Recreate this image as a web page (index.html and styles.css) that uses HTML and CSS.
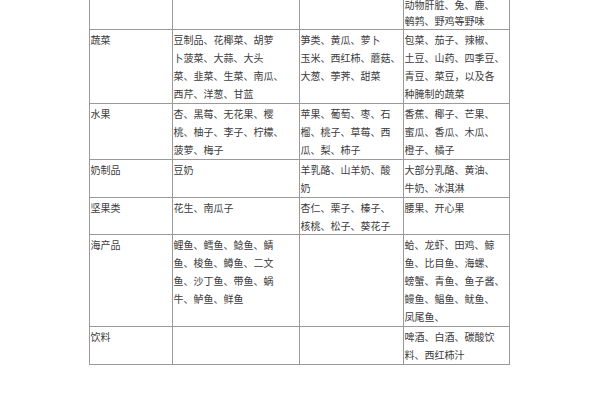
FILE: index.html
```html
<!DOCTYPE html>
<html lang="zh-CN">
<head>
<meta charset="utf-8">
<title>食物分类表</title>
<link rel="stylesheet" href="styles.css">
</head>
<body>
<table class="food">
  <colgroup>
    <col class="c1"><col class="c2"><col class="c3"><col class="c4">
  </colgroup>
  <tr class="lead">
    <td></td><td></td><td></td>
    <td>动物肝脏、兔、鹿、<br>鹌鹑、野鸡等野味</td>
  </tr>
  <tr>
    <td>蔬菜</td>
    <td>豆制品、花椰菜、胡萝<br>卜菠菜、大蒜、大头<br>菜、韭菜、生菜、南瓜、<br>西芹、洋葱、甘蓝</td>
    <td>笋类、黄瓜、萝卜<br>玉米、西红柿、蘑菇、<br>大葱、荸荠、甜菜</td>
    <td>包菜、茄子、辣椒、<br>土豆、山药、四季豆、<br>青豆、菜豆，以及各<br>种腌制的蔬菜</td>
  </tr>
  <tr>
    <td>水果</td>
    <td>杏、黑莓、无花果、樱<br>桃、柚子、李子、柠檬、<br>菠萝、梅子</td>
    <td>苹果、葡萄、枣、石<br>榴、桃子、草莓、西<br>瓜、梨、柿子</td>
    <td>香蕉、椰子、芒果、<br>蜜瓜、香瓜、木瓜、<br>橙子、橘子</td>
  </tr>
  <tr>
    <td>奶制品</td>
    <td>豆奶</td>
    <td>羊乳酪、山羊奶、酸<br>奶</td>
    <td>大部分乳酪、黄油、<br>牛奶、冰淇淋</td>
  </tr>
  <tr>
    <td>坚果类</td>
    <td>花生、南瓜子</td>
    <td>杏仁、栗子、榛子、<br>核桃、松子、葵花子</td>
    <td>腰果、开心果</td>
  </tr>
  <tr>
    <td>海产品</td>
    <td>鲤鱼、鳕鱼、鲶鱼、鲭<br>鱼、梭鱼、鳟鱼、二文<br>鱼、沙丁鱼、带鱼、蜗<br>牛、鲈鱼、鲜鱼</td>
    <td></td>
    <td>蛤、龙虾、田鸡、鲸<br>鱼、比目鱼、海螺、<br>螃蟹、青鱼、鱼子酱、<br>鳗鱼、鲳鱼、鱿鱼、<br>凤尾鱼、</td>
  </tr>
  <tr>
    <td>饮料</td>
    <td></td>
    <td></td>
    <td>啤酒、白酒、碳酸饮<br>料、西红柿汁</td>
  </tr>
</table>
</body>
</html>
```

FILE: styles.css
```css
html, body {
  margin: 0;
  padding: 0;
  background: #ffffff;
}

body {
  width: 600px;
  height: 400px;
  overflow: hidden;
}

.food {
  border-collapse: collapse;
  table-layout: fixed;
  width: 421px;
  margin-top: -5px;
  margin-left: 88.5px;
  font-family: "Noto Sans CJK SC", sans-serif;
  font-size: 10px;
  line-height: 17.95px;
  color: #3c3c3c;
}

.c1 { width: 83px; }
.c2 { width: 127px; }
.c3 { width: 104px; }
.c4 { width: 106px; }

.food td {
  border: 1px solid #9a9a9a;
  padding: 1px 0 0 1px;
  vertical-align: top;
  white-space: nowrap;
  overflow: hidden;
}

.food .lead td {
  line-height: 16px;
}
```
